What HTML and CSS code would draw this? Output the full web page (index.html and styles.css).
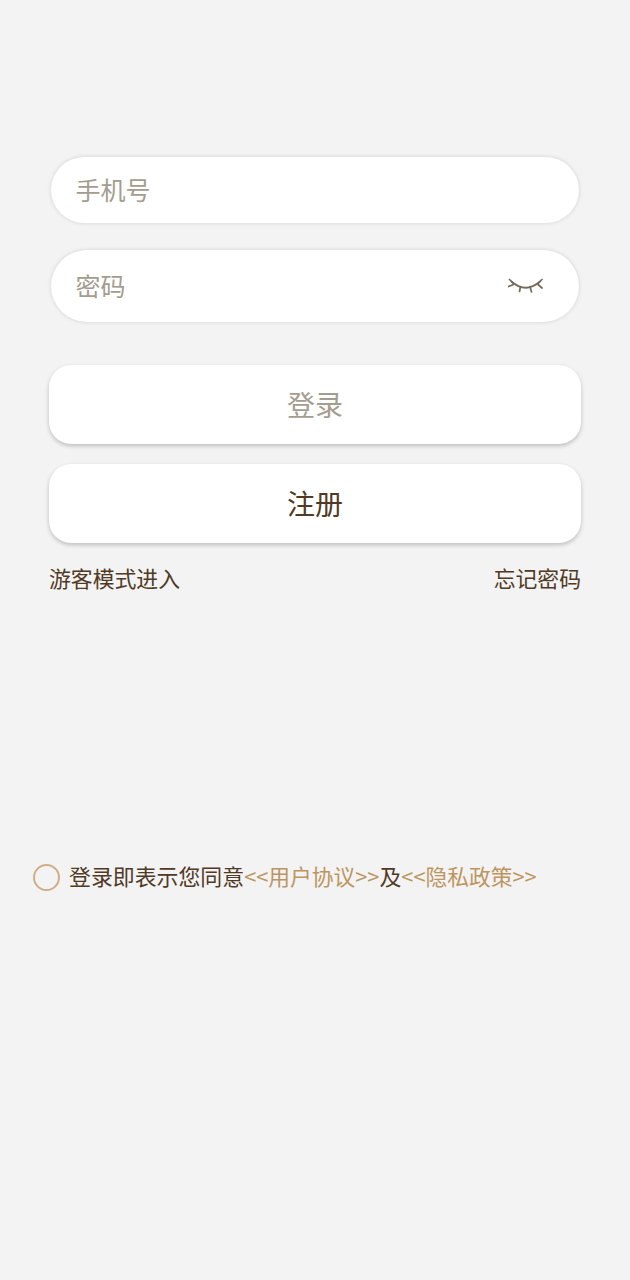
FILE: index.html
```html
<!DOCTYPE html>
<html lang="zh-CN">
<head>
  <meta charset="UTF-8" />
  <title>登录</title>
  <link rel="stylesheet" href="styles.css">
</head>
<body>
  <div class="login">
    <!-- Inputs -->
    <div class="field field-phone">
      <span class="placeholder">手机号</span>
    </div>
    <div class="field field-password">
      <span class="placeholder">密码</span>
      <svg class="eye" viewBox="0 0 36 20" width="36" height="20">
        <path d="M3.500 5.500 Q17.500 18 32 5.500" />
        <path d="M1.500 3.500 L5.500 7.500 M0.500 10.500 L5.500 8.500 M12.500 10.500 L11.500 15.500 M22 10.500 L23.500 16 M30 7.500 L34 3.500 M30 8.500 L34 12" />
      </svg>
    </div>

    <!-- Buttons -->
    <button class="btn btn-login">登录</button>
    <button class="btn btn-register">注册</button>

    <div class="links">
      <span>游客模式进入</span>
      <span>忘记密码</span>
    </div>

    <!-- Agreement -->
    <div class="agreement">
      <span class="radio"></span>
      <span class="agreement-text">登录即表示您同意<span class="link">&lt;&lt;用户协议&gt;&gt;</span>及<span class="link">&lt;&lt;隐私政策&gt;&gt;</span></span>
    </div>
  </div>
</body>
</html>
```

FILE: styles.css
```css
/* Basic resets & layout */
html, body {
  margin: 0;
  padding: 0;
  width: 100%;
  height: 100%;
  background-color: #f3f3f3;
  color: #503a25;
  font-family: "Noto Sans CJK SC", "Noto Sans", sans-serif;
  overflow: hidden;
}

.login {
  display: flex;
  flex-direction: column;
  padding-top: 157px;
  box-sizing: border-box;
  height: 100%;
}

/* Inputs */
.field {
  display: flex;
  align-items: center;
  justify-content: space-between;
  box-sizing: border-box;
  width: 528px;
  margin-left: 51px;
  padding: 0 35px 0 24.5px;
  background: #fff;
  border-radius: 36px;
  box-shadow: 0 0 4px rgba(0, 0, 0, 0.14);
}
.field-phone {
  height: 66px;
  margin-bottom: 27px;
}
.field-password {
  height: 72px;
  margin-bottom: 43px;
}
.placeholder {
  padding-bottom: 2px;
  font-size: 25px;
  line-height: 1;
  color: #a49c8f;
}
.eye {
  fill: none;
  stroke: #75695b;
  stroke-width: 1.7;
  stroke-linecap: round;
}

/* Buttons */
.btn {
  display: block;
  width: 532px;
  height: 79px;
  margin: 0 0 20px 49px;
  padding: 0 0 2px;
  border: none;
  border-radius: 22px;
  background: #fff;
  font-family: inherit;
  font-size: 28px;
  box-shadow: 0 2px 4px rgba(0, 0, 0, 0.22);
}
.btn-login {
  color: #a49c8f;
}
.btn-register {
  color: #503a25;
  margin-bottom: 19px;
}

.links {
  display: flex;
  justify-content: space-between;
  width: 532px;
  margin-left: 49px;
  font-size: 21.85px;
  line-height: 32px;
}

/* Agreement */
.agreement {
  display: flex;
  align-items: center;
  margin: 266px 0 0 33px;
  font-size: 21.9px;
  line-height: 32px;
}
.agreement-text {
  padding-bottom: 2px;
}
.radio {
  box-sizing: border-box;
  width: 27px;
  height: 27px;
  margin-right: 9px;
  border: 2px solid #cfae86;
  border-radius: 50%;
}
.link {
  font-size: 21.75px;
  color: #bd9560;
}
```
